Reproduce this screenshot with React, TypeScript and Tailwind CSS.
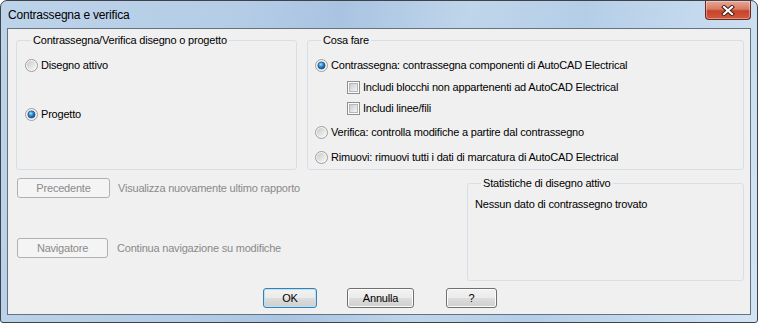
import type { ReactNode } from "react";

function Radio({ checked = false }: { checked?: boolean }) {
  return (
    <svg width="13" height="13" viewBox="0 0 13 13" className="shrink-0">
      <defs>
        <linearGradient id="radio-bg" x1="0" y1="0" x2="1" y2="1">
          <stop offset="0" stopColor="#c9c9c9" />
          <stop offset="1" stopColor="#f9f9f9" />
        </linearGradient>
        <radialGradient id="radio-dot" cx="0.4" cy="0.35" r="0.75">
          <stop offset="0" stopColor="#a6e4fd" />
          <stop offset="0.45" stopColor="#2b86cc" />
          <stop offset="1" stopColor="#0c3b6e" />
        </radialGradient>
      </defs>
      <circle cx="6.5" cy="6.5" r="6" fill="#f6f6f6" stroke="#9a9c9e" />
      <circle cx="6.5" cy="6.5" r="4.6" fill="url(#radio-bg)" />
      {checked && (
        <circle cx="6.5" cy="6.5" r="3.6" fill="url(#radio-dot)" stroke="#1b4d80" strokeWidth="0.6" />
      )}
    </svg>
  );
}

function Check() {
  return (
    <svg width="13" height="13" viewBox="0 0 13 13" className="shrink-0">
      <defs>
        <linearGradient id="check-bg" x1="0" y1="0" x2="1" y2="1">
          <stop offset="0" stopColor="#c6cacf" />
          <stop offset="1" stopColor="#f7f7f7" />
        </linearGradient>
      </defs>
      <rect x="0.5" y="0.5" width="12" height="12" fill="#fdfdfd" stroke="#8e8f8f" />
      <rect x="2.5" y="2.5" width="8" height="8" fill="url(#check-bg)" stroke="#b4b8bd" />
    </svg>
  );
}

function Option({ children, radio, checked }: { children: ReactNode; radio?: boolean; checked?: boolean }) {
  return (
    <div className="flex h-[13px] items-center gap-[3px] leading-[13px]">
      {radio ? <Radio checked={checked} /> : <Check />}
      <span>{children}</span>
    </div>
  );
}

function Button({ children, className, kind = "normal" }: { children: ReactNode; className: string; kind?: "normal" | "default" | "disabled" }) {
  const look =
    kind === "disabled"
      ? "border-[#adb2b5] bg-[#f4f4f4] text-[#8a8a8a]"
      : kind === "default"
        ? "border-[#3c7fb1] bg-[linear-gradient(#f2f2f2_0%,#ebebeb_50%,#dddddd_50%,#cfcfcf_100%)] text-black shadow-[inset_0_0_0_1px_#b7e2f7]"
        : "border-[#707070] bg-[linear-gradient(#f2f2f2_0%,#ebebeb_50%,#dddddd_50%,#cfcfcf_100%)] text-black shadow-[inset_0_0_0_1px_#fcfcfc]";
  return (
    <div className={`flex h-[20px] shrink-0 items-center justify-center rounded-[3px] border text-[11px] ${look} ${className}`}>
      {children}
    </div>
  );
}

export default function App() {
  return (
    <div className="flex h-[323px] w-[758px] flex-col overflow-hidden rounded-t-[7px] rounded-b-[3px] border border-[#3f4348] bg-[linear-gradient(100deg,#bdd3ea_0%,#b4cce6_30%,#a9c4e2_42%,#bfd5eb_58%,#b5cee8_72%,#d3e4f4_100%)] font-['Liberation_Sans',Arial,sans-serif] text-[11px] tracking-[-0.2px] text-black">
      {/* Title bar */}
      <div className="flex h-[27px] shrink-0">
        <div className="self-center pl-[7px] text-[12px] leading-none">Contrassegna e verifica</div>
        <div className="ml-auto mr-[6px] flex h-[19px] w-[46px] items-center justify-center rounded-b-[4px] border border-t-0 border-[#6b2a20] bg-[linear-gradient(#e9a796_0%,#d77a63_45%,#c7432b_55%,#cf5a3f_100%)] shadow-[inset_0_0_0_1px_rgba(255,255,255,0.35)]">
          <svg width="14" height="11" viewBox="0 0 14 11">
            <path d="M3 2 L11 9 M11 2 L3 9" stroke="#3a1a14" strokeWidth="4" strokeLinecap="square" />
            <path d="M3 2 L11 9 M11 2 L3 9" stroke="#ffffff" strokeWidth="2.2" strokeLinecap="square" />
          </svg>
        </div>
      </div>

      {/* Client area */}
      <div className="ml-[6px] h-[287px] w-[744px] border border-[#66717e] bg-[#f0f0f0]">
        <div className="flex flex-col pl-[8px] pt-[5px]">
          <div className="flex gap-[10px]">
            <fieldset className="h-[136px] w-[281px] rounded-[3px] border border-[#d5dfe5] pl-[8px]">
              <legend className="ml-[6px] px-[2px] leading-[13px]">Contrassegna/Verifica disegno o progetto</legend>
              <div className="mt-[12px]">
                <Option radio>Disegno attivo</Option>
              </div>
              <div className="mt-[36px]">
                <Option radio checked>Progetto</Option>
              </div>
            </fieldset>

            <fieldset className="h-[136px] w-[437px] rounded-[3px] border border-[#d5dfe5] pl-[7px]">
              <legend className="ml-[6px] px-[2px] leading-[13px]">Cosa fare</legend>
              <div className="mt-[12px]">
                <Option radio checked>Contrassegna: contrassegna componenti di AutoCAD Electrical</Option>
              </div>
              <div className="mt-[9px] pl-[32px]">
                <Option>Includi blocchi non appartenenti ad AutoCAD Electrical</Option>
              </div>
              <div className="mt-[8px] pl-[32px]">
                <Option>Includi linee/fili</Option>
              </div>
              <div className="mt-[11px]">
                <Option radio>Verifica: controlla modifiche a partire dal contrassegno</Option>
              </div>
              <div className="mt-[12px]">
                <Option radio>Rimuovi: rimuovi tutti i dati di marcatura di AutoCAD Electrical</Option>
              </div>
            </fieldset>
          </div>

          <div className="mt-[7px] flex">
            <div className="flex w-[451px] flex-col pl-[1px] pt-[1px]">
              <div className="flex items-center">
                <Button kind="disabled" className="w-[93px]">Precedente</Button>
                <span className="ml-[8px] text-[#8a8a8a]">Visualizza nuovamente ultimo rapporto</span>
              </div>
              <div className="mt-[40px] flex items-center">
                <Button kind="disabled" className="w-[91px]">Navigatore</Button>
                <span className="ml-[9px] text-[#8a8a8a]">Continua navigazione su modifiche</span>
              </div>
            </div>
            <fieldset className="h-[104px] w-[277px] rounded-[3px] border border-[#d5dfe5] pl-[7px]">
              <legend className="ml-[6px] px-[2px] leading-[13px]">Statistiche di disegno attivo</legend>
              <div className="mt-[8px] leading-[13px]">Nessun dato di contrassegno trovato</div>
            </fieldset>
          </div>

          <div className="mt-[7px] flex pl-[247px]">
            <Button kind="default" className="w-[54px]">OK</Button>
            <Button className="ml-[30px] w-[67px]">Annulla</Button>
            <Button className="ml-[32px] w-[51px]">?</Button>
          </div>
        </div>
      </div>
    </div>
  );
}
